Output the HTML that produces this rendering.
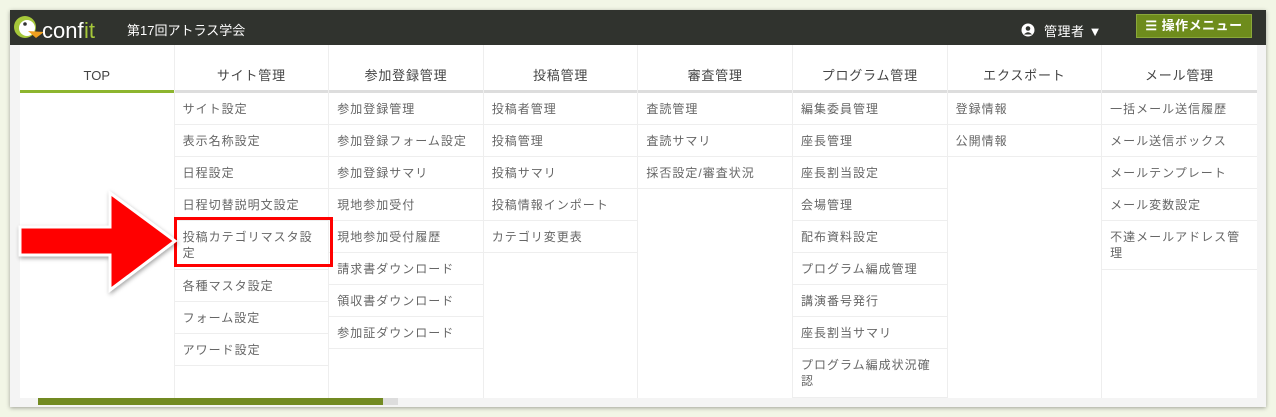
<!DOCTYPE html>
<html><head><meta charset="utf-8"><style>
body{margin:0;width:1276px;height:417px;background:#f2f6e6;font-family:"Liberation Sans","Noto Sans CJK JP",sans-serif;position:relative;overflow:hidden}
.panel{position:absolute;left:10px;top:10px;width:1256px;height:397px;background:#f4f4f4;box-shadow:0 1px 4px rgba(0,0,0,.35)}
.hdr{position:absolute;left:10px;top:10px;width:1256px;height:35px;background:#30332e}
.title{position:absolute;left:127px;top:20px;color:#fff;font-size:13px}
.user{position:absolute;left:1021px;top:21px;color:#fff;font-size:13px;letter-spacing:0.5px}
.btn{position:absolute;left:1136px;top:14px;width:116px;height:24px;background:#6e8c1c;border:1px solid #8aa83a;box-sizing:border-box;color:#fff;font-size:13px;font-weight:bold;line-height:22px;text-align:center;letter-spacing:0.5px}
.menu{position:absolute;left:20px;top:45px;width:1237px;height:353px;background:#fff;display:flex}
.col{width:154.6px;border-right:1px solid #eee;box-sizing:border-box}
.col:last-child{border-right:none}
.ch{height:45px;line-height:62px;text-align:center;font-size:13px;color:#444;border-bottom:3px solid #ddd;letter-spacing:0.8px}
.ch.on{border-bottom-color:#8db52e;letter-spacing:0}
.it{padding:1px 8px 0;line-height:31px;height:30px;border-bottom:1px solid #eee;font-size:12px;letter-spacing:1px;color:#666;white-space:nowrap}
.it.t{height:auto;line-height:16px;padding:8px 8px 8px;white-space:normal}
.bar{position:absolute;left:38px;top:398px;width:345px;height:7px;background:#728a22}
.bar2{position:absolute;left:383px;top:398px;width:15px;height:7px;background:#ddd}
.box{position:absolute;left:174px;top:217px;width:159px;height:50px;border:3px solid #f00;box-sizing:border-box}
</style></head><body>
<div class="panel"></div>
<div class="bar"></div><div class="bar2"></div>
<div class="hdr"></div>
<svg style="position:absolute;left:12px;top:12px" width="100" height="32" viewBox="0 0 100 32">
<circle cx="13" cy="15" r="11" fill="#a6c83a"/><circle cx="15" cy="16" r="8" fill="#fff"/><circle cx="13" cy="12" r="1.8" fill="#333"/>
<path d="M16 19 L32 20 L24 26 Z" fill="#f0a020"/>
<text x="30" y="26" font-family="Liberation Sans" font-size="22" fill="#fff">conf</text><text x="72" y="26" font-family="Liberation Sans" font-size="22" fill="#a6c83a">it</text>
</svg>
<div class="title">第17回アトラス学会</div>
<svg style="position:absolute;left:1021px;top:23px" width="14" height="14" viewBox="0 0 14 14"><circle cx="7" cy="7" r="6.5" fill="#fff"/><circle cx="7" cy="5.5" r="2.3" fill="#30332e"/><path d="M3 11.5 Q7 7 11 11.5" fill="#30332e"/></svg>
<div class="user" style="left:1044px">管理者 ▼</div>
<div class="btn">☰ 操作メニュー</div>
<div class="menu">
<div class="col"><div class="ch on">TOP</div></div>
<div class="col"><div class="ch">サイト管理</div><div class="it">サイト設定</div><div class="it">表示名称設定</div><div class="it">日程設定</div><div class="it">日程切替説明文設定</div><div class="it t">投稿カテゴリマスタ設<br>定</div><div class="it">各種マスタ設定</div><div class="it">フォーム設定</div><div class="it">アワード設定</div></div>
<div class="col"><div class="ch">参加登録管理</div><div class="it">参加登録管理</div><div class="it">参加登録フォーム設定</div><div class="it">参加登録サマリ</div><div class="it">現地参加受付</div><div class="it">現地参加受付履歴</div><div class="it">請求書ダウンロード</div><div class="it">領収書ダウンロード</div><div class="it">参加証ダウンロード</div></div>
<div class="col"><div class="ch">投稿管理</div><div class="it">投稿者管理</div><div class="it">投稿管理</div><div class="it">投稿サマリ</div><div class="it">投稿情報インポート</div><div class="it">カテゴリ変更表</div></div>
<div class="col"><div class="ch">審査管理</div><div class="it">査読管理</div><div class="it">査読サマリ</div><div class="it">採否設定/審査状況</div></div>
<div class="col"><div class="ch">プログラム管理</div><div class="it">編集委員管理</div><div class="it">座長管理</div><div class="it">座長割当設定</div><div class="it">会場管理</div><div class="it">配布資料設定</div><div class="it">プログラム編成管理</div><div class="it">講演番号発行</div><div class="it">座長割当サマリ</div><div class="it t">プログラム編成状況確<br>認</div></div>
<div class="col"><div class="ch">エクスポート</div><div class="it">登録情報</div><div class="it">公開情報</div></div>
<div class="col"><div class="ch">メール管理</div><div class="it">一括メール送信履歴</div><div class="it">メール送信ボックス</div><div class="it">メールテンプレート</div><div class="it">メール変数設定</div><div class="it t">不達メールアドレス管<br>理</div></div>
</div>
<div class="box"></div>
<svg style="position:absolute;left:0;top:180px" width="190" height="120" viewBox="0 180 190 120">
<defs><filter id="s"><feDropShadow dx="1" dy="2" stdDeviation="2" flood-opacity=".35"/></filter></defs>
<path d="M20 227 L110 227 L110 193 L175 241 L110 290 L110 255 L20 255 Z" fill="#f00" stroke="#fff" stroke-width="3" stroke-linejoin="miter" filter="url(#s)"/>
</svg>
</body></html>
